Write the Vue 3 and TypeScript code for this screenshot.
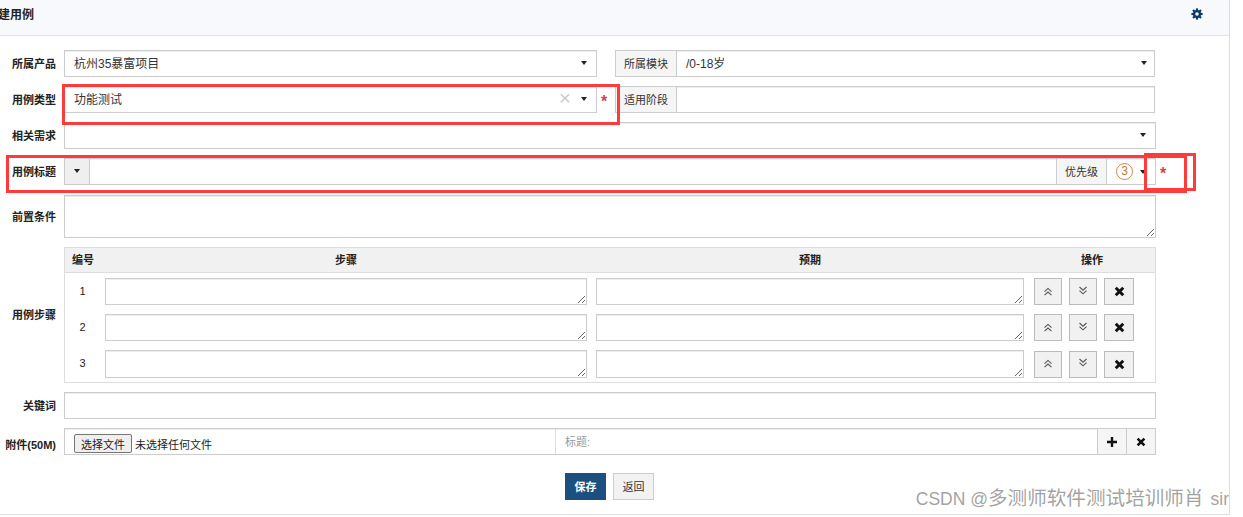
<script setup lang="ts">
// 建用例表单
interface Step {
  id: number;
}

const steps: Step[] = [{ id: 1 }, { id: 2 }, { id: 3 }];
</script>

<template>
  <div class="page">
    <header class="head">
      <strong class="head-title">建用例</strong>
      <svg class="gear" viewBox="0 0 12 12" aria-hidden="true">
        <g stroke="#0b3a66" stroke-width="2.2">
          <line x1="6" y1="0.4" x2="6" y2="11.6" />
          <line x1="0.4" y1="6" x2="11.6" y2="6" />
          <line x1="2" y1="2" x2="10" y2="10" />
          <line x1="10" y1="2" x2="2" y2="10" />
        </g>
        <circle cx="6" cy="6" r="4" fill="#0b3a66" />
        <circle cx="6" cy="6" r="1.8" fill="#f8f9fd" />
      </svg>
    </header>

    <form class="form" @submit.prevent>
      <div class="row">
        <label class="row-label">所属产品</label>
        <div class="half-pair">
          <div class="box sel half">
            <span>杭州35暴富项目</span>
            <i class="caret"></i>
          </div>
          <span class="star-slot"></span>
          <div class="group half-right">
            <span class="addon addon-wide">所属模块</span>
            <div class="box sel grow joined">
              <span>/0-18岁</span>
              <i class="caret"></i>
            </div>
          </div>
        </div>
      </div>

      <div class="row">
        <label class="row-label">用例类型</label>
        <div class="half-pair">
          <div class="box sel half">
            <span>功能测试</span>
            <span class="clear">×</span>
            <i class="caret"></i>
          </div>
          <span class="star-slot"><span class="star">*</span></span>
          <div class="group half-right">
            <span class="addon addon-wide">适用阶段</span>
            <div class="box grow joined"></div>
          </div>
        </div>
      </div>

      <div class="row">
        <label class="row-label">相关需求</label>
        <div class="box sel full">
          <span></span>
          <i class="caret"></i>
        </div>
      </div>

      <div class="row">
        <label class="row-label">用例标题</label>
        <div class="group full">
          <span class="addon addon-caret"><i class="caret"></i></span>
          <input class="box grow joined title-input" type="text" />
          <span class="addon addon-pri">优先级</span>
          <div class="box sel pri joined">
            <span class="pri-badge">3</span>
            <i class="caret"></i>
          </div>
        </div>
        <span class="star title-star">*</span>
      </div>

      <div class="row row-pre">
        <label class="row-label">前置条件</label>
        <textarea class="box area full pre-area"></textarea>
      </div>

      <div class="row row-steps">
        <label class="row-label">用例步骤</label>
        <div class="steps full">
          <div class="steps-head">
            <span class="th-no">编号</span>
            <span class="th">步骤</span>
            <span class="th">预期</span>
            <span class="th th-ops">操作</span>
          </div>
          <div class="steps-body">
            <div v-for="s in steps" :key="s.id" class="step-row">
              <span class="step-no">{{ s.id }}</span>
              <textarea class="box area"></textarea>
              <textarea class="box area"></textarea>
              <div class="ops">
                <button type="button" class="op">
                  <svg viewBox="0 0 10 10" width="10" height="10" aria-hidden="true">
                    <path d="M1.5 4.6 5 1.4l3.5 3.2M1.5 8.2 5 5l3.5 3.2" fill="none" stroke="#555" stroke-width="1.1" />
                  </svg>
                </button>
                <button type="button" class="op">
                  <svg class="icon-down" viewBox="0 0 10 10" width="10" height="10" aria-hidden="true">
                    <path d="M1.5 1 5 4.2 8.5 1M1.5 4.6 5 7.8l3.5-3.2" fill="none" stroke="#555" stroke-width="1.1" />
                  </svg>
                </button>
                <button type="button" class="op op-del">
                  <svg viewBox="0 0 10 10" width="11" height="11" aria-hidden="true">
                    <path d="M1.6 1.6l6.8 6.8M8.4 1.6 1.6 8.4" fill="none" stroke="#111" stroke-width="2.7" />
                  </svg>
                </button>
              </div>
            </div>
          </div>
        </div>
      </div>

      <div class="row">
        <label class="row-label">关键词</label>
        <input class="box full" type="text" />
      </div>

      <div class="row">
        <label class="row-label row-label-low">附件(50M)</label>
        <div class="box attach full">
          <div class="file-cell">
            <button type="button" class="file-btn">选择文件</button>
            <span class="file-none">未选择任何文件</span>
          </div>
          <div class="caption">标题:</div>
          <button type="button" class="attach-btn">
            <svg viewBox="0 0 10 10" width="10" height="10" aria-hidden="true">
              <path d="M5 0v10M0 5h10" fill="none" stroke="#111" stroke-width="2.4" />
            </svg>
          </button>
          <button type="button" class="attach-btn">
            <svg viewBox="0 0 10 10" width="10" height="10" aria-hidden="true">
              <path d="M1.6 1.6l6.8 6.8M8.4 1.6 1.6 8.4" fill="none" stroke="#111" stroke-width="2.6" />
            </svg>
          </button>
        </div>
      </div>

      <div class="actions">
        <button type="submit" class="btn btn-save">保存</button>
        <button type="button" class="btn btn-back">返回</button>
      </div>
    </form>

    <!-- 截图上的标注框和水印 -->
    <div class="mark mark-type"></div>
    <div class="mark mark-title"></div>
    <div class="mark mark-pri"></div>
    <div class="watermark"><span class="wm-latin">CSDN @</span>多测师软件测试培训师肖<span class="wm-latin wm-sir">sir</span></div>
  </div>
</template>

<style scoped>
.page {
  position: relative;
  box-sizing: border-box;
  width: 1230px;
  height: 515px;
  overflow: hidden;
  background: #fff;
  border-right: 1px solid #ddd;
  border-bottom: 1px solid #ddd;
  font: 12px "Liberation Sans", "Noto Sans CJK SC", sans-serif;
  color: #333;
}
.head {
  display: flex;
  align-items: center;
  justify-content: space-between;
  box-sizing: border-box;
  height: 36px;
  padding: 0 26px 8px 0;
  background: #f8f9fd;
  border-bottom: 1px solid #e2e2e2;
}
.head-title {
  margin-left: -2px;
  font-size: 12px;
  color: #222;
}
.gear {
  width: 12px;
  height: 12px;
}
.form {
  display: flex;
  flex-direction: column;
  gap: 9px;
  padding-top: 14px;
}
.row {
  display: flex;
  align-items: center;
  height: 27px;
}
.row-label {
  flex: none;
  box-sizing: border-box;
  width: 64px;
  padding: 0 8px 2px 0;
  text-align: right;
  font-size: 11px;
  font-weight: 700;
  color: #222;
  white-space: nowrap;
}
.row-label-low {
  padding: 5px 8px 0 0;
}
.row-pre {
  height: 43px;
  margin-top: 1px;
}
.row-steps {
  height: 136px;
}
.half-pair {
  display: flex;
  align-items: center;
}
.half {
  width: 533px;
}
.half-right {
  width: 540px;
}
.star-slot {
  display: flex;
  justify-content: center;
  box-sizing: border-box;
  width: 18px;
  padding-right: 4px;
}
.star {
  color: #d8404a;
  font-size: 16px;
  font-weight: 700;
  line-height: 1;
  padding-top: 5px;
}
.title-star {
  margin-left: 4px;
}
.full {
  width: 1092px;
}
.box {
  box-sizing: border-box;
  height: 27px;
  padding: 0 9px;
  background: #fff;
  border: 1px solid #ccc;
  box-shadow: inset 0 1px 1px rgba(0, 0, 0, 0.075);
  font: inherit;
  color: #333;
  outline: none;
}
.sel {
  display: flex;
  align-items: center;
  justify-content: space-between;
  padding-bottom: 2px;
}
.joined.sel {
  padding-right: 7px;
}
.clear {
  margin-left: auto;
  margin-right: 10px;
  padding-bottom: 3px;
  font-size: 21px;
  line-height: 1;
  color: #ccc;
}
.caret {
  flex: none;
  width: 0;
  height: 0;
  border-top: 4px solid #222;
  border-left: 3.5px solid transparent;
  border-right: 3.5px solid transparent;
}
.group {
  display: flex;
  align-items: center;
}
.grow {
  flex: 1;
  min-width: 0;
}
.joined {
  border-left: 0;
}
.addon {
  flex: none;
  display: flex;
  align-items: center;
  justify-content: center;
  box-sizing: border-box;
  height: 27px;
  padding-bottom: 1px;
  background: #f5f5f5;
  border: 1px solid #ccc;
  font-size: 11px;
  color: #333;
}
.addon-wide {
  width: 62px;
}
.addon-caret {
  width: 26px;
  background: #efefef;
}
.addon-pri {
  width: 51px;
  margin-left: -1px;
}
.title-input {
  border-right: 0;
}
.pri {
  flex: none;
  width: 49px;
  padding: 0 9px;
}
.joined.pri {
  padding: 0 9px;
}
.pri-badge {
  box-sizing: border-box;
  width: 17px;
  height: 17px;
  border: 1px solid #c98a50;
  border-radius: 50%;
  text-align: center;
  line-height: 15px;
  color: #b87c40;
}
.area {
  display: block;
  margin: 0;
  padding: 4px 8px;
  resize: both;
}
.pre-area {
  height: 43px;
}
.steps {
  box-sizing: border-box;
  height: 136px;
  border: 1px solid #ddd;
}
.steps-head,
.step-row {
  display: grid;
  grid-template-columns: 31px 482px 428px 1fr;
  column-gap: 9px;
  align-items: center;
}
.steps-head {
  box-sizing: border-box;
  height: 25px;
  padding-bottom: 2px;
  background: #f1f1f1;
  border-bottom: 1px solid #ddd;
  font-size: 11px;
  font-weight: 700;
  color: #222;
}
.th-no {
  padding-left: 7px;
  white-space: nowrap;
}
.th {
  text-align: center;
}
.th-ops {
  padding-right: 4px;
}
.steps-body {
  display: flex;
  flex-direction: column;
  gap: 9px;
  padding-top: 5px;
}
.step-no {
  padding: 0 0 2px 4px;
  text-align: center;
  font-size: 11px;
  color: #222;
}
.step-row .area {
  width: 100%;
  height: 27px;
  max-width: 100%;
  resize: both;
}
.step-row:last-child .area {
  height: 28px;
}
.ops {
  display: flex;
  gap: 7px;
  padding-left: 1px;
}
.op {
  display: flex;
  align-items: center;
  justify-content: center;
  box-sizing: border-box;
  width: 28px;
  height: 27px;
  padding: 0;
  background: #f1f1f1;
  border: 1px solid #bbb;
}
.op-del {
  width: 30px;
}
.icon-down {
  margin-bottom: 2px;
}
.attach {
  display: flex;
  align-items: stretch;
  padding: 0;
}
.file-cell {
  display: flex;
  align-items: center;
  box-sizing: border-box;
  width: 491px;
  padding: 4px 0 0 9px;
  border-right: 1px solid #ddd;
}
.file-btn {
  box-sizing: border-box;
  width: 58px;
  height: 19px;
  padding: 0;
  background: #efefef;
  border: 1px solid #767676;
  border-radius: 2px;
  font: 11px "Liberation Sans", "Noto Sans CJK SC", sans-serif;
  color: #222;
}
.file-none {
  margin-left: 3px;
  font-size: 11px;
  color: #222;
}
.caption {
  flex: 1;
  display: flex;
  align-items: center;
  padding: 0 0 2px 9px;
  font-size: 11px;
  color: #999;
}
.attach-btn {
  flex: none;
  display: flex;
  align-items: center;
  justify-content: center;
  box-sizing: border-box;
  width: 29px;
  padding: 0;
  background: #f5f5f5;
  border: 0;
  border-left: 1px solid #ccc;
}
.actions {
  display: flex;
  justify-content: center;
  gap: 7px;
  width: 1219px;
  margin-top: 9px;
}
.btn {
  box-sizing: border-box;
  height: 27px;
  padding: 0 0 2px;
  font: 700 11px "Liberation Sans", "Noto Sans CJK SC", sans-serif;
}
.btn-save {
  width: 41px;
  background: #1a4f80;
  border: 1px solid #1a4f80;
  color: #fff;
}
.btn-back {
  width: 41px;
  background: #f2f2f2;
  border: 1px solid #ccc;
  font-weight: 400;
  color: #333;
}
.mark {
  position: absolute;
  box-sizing: border-box;
  border: 3px solid #ff3b3b;
  pointer-events: none;
}
.mark-type {
  left: 62px;
  top: 84px;
  width: 558px;
  height: 41px;
}
.mark-title {
  left: 6px;
  top: 155px;
  width: 1181px;
  height: 38px;
}
.mark-pri {
  left: 1144px;
  top: 153px;
  width: 52px;
  height: 38px;
}
.watermark {
  position: absolute;
  right: 0;
  top: 487px;
  font-size: 19.6px;
  line-height: 22px;
  white-space: nowrap;
  color: rgba(120, 120, 120, 0.7);
}
.wm-latin {
  font-size: 17.5px;
}
.wm-sir {
  margin-left: 7px;
}
</style>

<style>
html,
body {
  margin: 0;
  background: #fff;
}
</style>
